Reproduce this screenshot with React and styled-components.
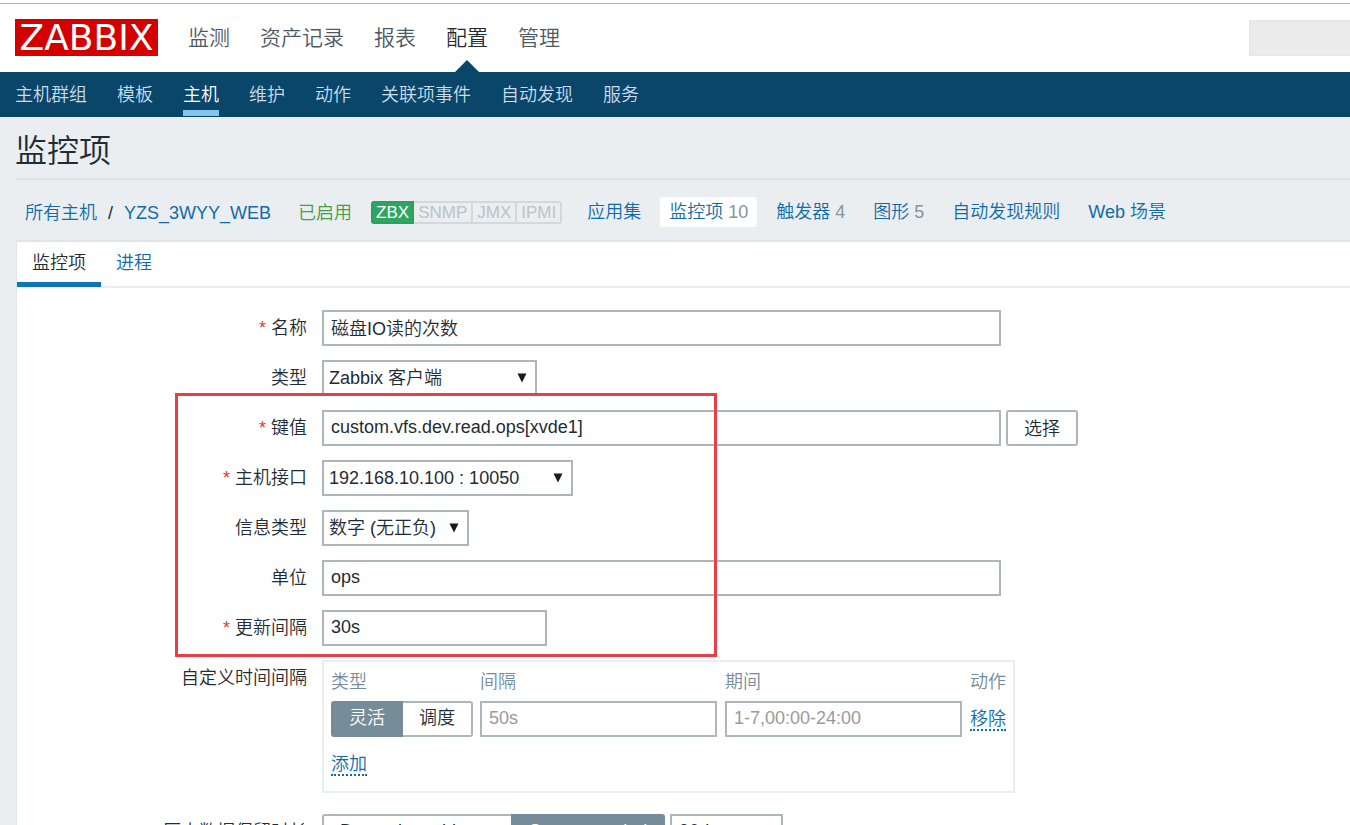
import React, { useState } from "react";
import styled, { createGlobalStyle, css } from "styled-components";

const color = {
  text: "#1f2c33",
  link: "#0f6ca8",
  muted: "#768d99",
  border: "#acb7bb",
  line: "#dfe4e7",
  page: "#ebeef0",
  navy: "#0a466a",
  red: "#e5404a",
};

const GlobalStyle = createGlobalStyle`
  *, *::before, *::after { box-sizing: border-box; }
  body {
    margin: 0;
    background: ${color.page};
    color: ${color.text};
    font: 350 18px/24px "Liberation Sans", "Noto Sans CJK SC", sans-serif;
  }
  input, select, button { font: inherit; color: inherit; }
  a { color: ${color.link}; text-decoration: none; }
`;

const Page = styled.div`
  height: 100vh;
  overflow: hidden;
  padding-top: 3px;
  background: #fff;
`;

const Header = styled.header`
  display: flex;
  align-items: center;
  height: 69px;
  padding-left: 15px;
  border-top: 1px solid #b2b4b8;
`;

const Logo = styled.a`
  width: 143px;
  height: 37px;
  margin: 0 30px 1px 0;
  background: #d40000;
  color: #fff;
  font: 400 36px/37px "DejaVu Sans", sans-serif;
  text-align: center;
`;

const MainNav = styled.nav`
  display: flex;
  gap: 30px;
  align-self: stretch;
`;

const MainLink = styled.a`
  position: relative;
  display: flex;
  align-items: center;
  font-size: 21px;
  color: ${(p) => (p.$active ? color.text : "#4d5a63")};
  ${(p) =>
    p.$active &&
    css`
      &::after {
        content: "";
        position: absolute;
        bottom: 0;
        left: 50%;
        margin-left: -12px;
        border: 12px solid transparent;
        border-top-width: 0;
        border-bottom-color: ${color.navy};
      }
    `}
`;

const Search = styled.input`
  width: 101px;
  height: 36px;
  margin-left: auto;
  border: 2px solid #e7e7e7;
  border-right: 0;
  background: #ececec;
`;

const SubNav = styled.nav`
  display: flex;
  gap: 30px;
  height: 45px;
  padding: 0 15px 1px;
  background: ${color.navy};
`;

const SubLink = styled.a`
  padding-top: 11px;
  border-bottom: 6px solid ${(p) => (p.$active ? "#7fc4ef" : "transparent")};
  color: ${(p) => (p.$active ? "#fff" : "#c9dcea")};
`;

const Content = styled.main`
  padding-left: 15px;
  background: ${color.page};
`;

const Title = styled.h1`
  margin: 0;
  padding: 14px 0 7px;
  border-bottom: 2px solid ${color.line};
  font-size: 32px;
  line-height: 40px;
  font-weight: 350;
`;

const Crumbs = styled.nav`
  display: flex;
  align-items: center;
  height: 60px;
  padding: 4px 0 0 10px;
  white-space: nowrap;
`;

const HostPath = styled.div`
  display: flex;
  gap: 11px;
  margin-right: 27px;
  padding-top: 2px;
`;

const Enabled = styled.span`
  margin-right: 19px;
  padding-top: 2px;
  color: #429e47;
`;

const Badges = styled.div`
  display: flex;
  margin-right: 16px;
  line-height: 19px;
`;

const Badge = styled.span`
  height: 23px;
  padding: 0 ${(p) => (p.$on ? "3px" : "4px")};
  border: 2px solid ${(p) => (p.$on ? "#2f9f5e" : "#d3d8db")};
  border-left-width: ${(p) => (p.$on ? "2px" : "0")};
  background: ${(p) => (p.$on ? "#2fa562" : "transparent")};
  color: ${(p) => (p.$on ? "#fff" : "#bcc3c7")};
  font-size: 17px;
  &:first-child { border-radius: 3px 0 0 3px; }
  &:last-child { border-radius: 0 3px 3px 0; }
`;

const Sections = styled.div`
  display: flex;
  gap: 10px;
`;

const SectionLink = styled.a`
  height: 30px;
  padding: 3px 9px;
  border-radius: 3px;
  background: ${(p) => (p.$active ? "#fff" : "transparent")};
`;

const Count = styled.span`
  color: #87949b;
`;

const Panel = styled.section`
  margin-left: 1px;
  border: solid ${color.line};
  border-width: 2px 0 0 1px;
  background: #fff;
`;

const Tabs = styled.div`
  display: flex;
  height: 46px;
  border-bottom: 2px solid ${color.page};
`;

const Tab = styled.button`
  height: 45px;
  padding: 1px 15px 0;
  border: 0;
  border-bottom: 5px solid ${(p) => (p.$active ? "#0f75b5" : "transparent")};
  background: none;
  color: ${(p) => (p.$active ? color.text : color.link)};
`;

const Form = styled.form`
  position: relative;
  display: flex;
  flex-direction: column;
  gap: 14px;
  padding: 22px 0;
`;

const Row = styled.div`
  display: grid;
  grid-template-columns: 290px 1fr;
  column-gap: 15px;
  margin-bottom: ${(p) => (p.$last ? "7px" : "0")};
`;

const Label = styled.label`
  padding-top: 6px;
  text-align: right;
  white-space: nowrap;
  &::before {
    content: ${(p) => (p.$required ? '"* "' : "none")};
    color: #e33734;
  }
`;

const Fields = styled.div`
  display: flex;
  gap: 5px;
`;

const widths = { full: "679px", medium: "225px", small: "113px", cell: "237px" };

const Input = styled.input`
  display: block;
  width: ${(p) => widths[p.$size]};
  height: 36px;
  padding: 0 7px 2px;
  border: 2px solid ${color.border};
  border-radius: 0;
  background: #fff;
  &::placeholder { color: #9a9a9a; opacity: 1; }
`;

const SelectBox = styled.div`
  position: relative;
  width: ${(p) => p.$width};
`;

const SelectControl = styled.select`
  appearance: none;
  width: 100%;
  height: 36px;
  padding: 0 24px 0 5px;
  border: 2px solid ${color.border};
  border-radius: 0;
  background: #fff;
`;

const Arrow = styled.svg`
  position: absolute;
  top: 13px;
  right: 10px;
  pointer-events: none;
`;

const Button = styled.button`
  width: 72px;
  height: 36px;
  padding: 2px 0 0;
  border: 2px solid ${color.border};
  border-radius: 3px;
  background: #fff;
`;

const IntervalBox = styled.div`
  width: 693px;
  height: 133px;
  padding: 0 7px;
  border: 2px solid ${color.page};
`;

const IntervalTable = styled.table`
  border-collapse: collapse;
  table-layout: fixed;
  width: 100%;
  th, td { padding: 0; text-align: left; white-space: nowrap; }
  th { height: 39px; color: ${color.muted}; font-weight: 350; }
  th:nth-child(1) { width: 149px; }
  th:nth-child(2), th:nth-child(3) { width: 245px; }
  tfoot td { height: 54px; }
`;

const ActionLink = styled.a`
  border-bottom: 2px dotted ${color.link};
`;

const SegmentGroup = styled.div`
  display: inline-flex;
  vertical-align: top;
`;

const Segment = styled.label`
  height: 36px;
  padding: 3px 16px 5px;
  border: 2px solid ${color.border};
  white-space: nowrap;
  &:first-child { border-right-width: 0; border-radius: 3px 0 0 3px; }
  &:last-child { border-left-width: 0; border-radius: 0 3px 3px 0; }
  &:has(input:checked) {
    border-width: 2px;
    border-color: ${color.muted};
    background: ${color.muted};
    color: #fff;
  }
`;

const HiddenRadio = styled.input`
  position: absolute;
  width: 1px;
  height: 1px;
  margin: 0;
  opacity: 0;
  pointer-events: none;
`;

const Highlight = styled.div`
  position: absolute;
  top: 105px;
  left: 158px;
  width: 542px;
  height: 264px;
  border: 3px solid ${color.red};
  pointer-events: none;
`;

function Select({ id, width, value }) {
  return (
    <SelectBox $width={width}>
      <SelectControl id={id} defaultValue={value}>
        <option>{value}</option>
      </SelectControl>
      <Arrow width="10" height="10" viewBox="0 0 10 10" aria-hidden="true">
        <path d="M0.5 0.5H9.5L5 9.5Z" fill="#1b1b1b" />
      </Arrow>
    </SelectBox>
  );
}

function Segments({ name, options, initial }) {
  const [value, setValue] = useState(initial);
  return (
    <SegmentGroup role="radiogroup" aria-label={name}>
      {options.map((o) => (
        <Segment key={o}>
          <HiddenRadio type="radio" name={name} checked={value === o} onChange={() => setValue(o)} />
          {o}
        </Segment>
      ))}
    </SegmentGroup>
  );
}

function Field({ id, label, required, last, children }) {
  return (
    <Row $last={last}>
      <Label htmlFor={id} $required={required}>{label}</Label>
      <Fields>{children}</Fields>
    </Row>
  );
}

const mainItems = ["监测", "资产记录", "报表", "配置", "管理"];
const subItems = ["主机群组", "模板", "主机", "维护", "动作", "关联项事件", "自动发现", "服务"];
const sections = [
  ["应用集"],
  ["监控项", 10],
  ["触发器", 4],
  ["图形", 5],
  ["自动发现规则"],
  ["Web 场景"],
];

export default function App() {
  return (
    <Page>
      <GlobalStyle />
      <Header>
        <Logo href="#">ZABBIX</Logo>
        <MainNav>
          {mainItems.map((t) => (
            <MainLink key={t} href="#" $active={t === "配置"}>{t}</MainLink>
          ))}
        </MainNav>
        <Search type="search" aria-label="搜索" />
      </Header>
      <SubNav>
        {subItems.map((t) => (
          <SubLink key={t} href="#" $active={t === "主机"}>{t}</SubLink>
        ))}
      </SubNav>
      <Content>
        <Title>监控项</Title>
        <Crumbs>
          <HostPath>
            <a href="#">所有主机</a>
            <span>/</span>
            <a href="#">YZS_3WYY_WEB</a>
          </HostPath>
          <Enabled>已启用</Enabled>
          <Badges>
            <Badge $on>ZBX</Badge>
            <Badge>SNMP</Badge>
            <Badge>JMX</Badge>
            <Badge>IPMI</Badge>
          </Badges>
          <Sections>
            {sections.map(([t, n]) => (
              <SectionLink key={t} href="#" $active={t === "监控项"}>
                {t}
                {n && <Count> {n}</Count>}
              </SectionLink>
            ))}
          </Sections>
        </Crumbs>
        <Panel>
          <Tabs>
            <Tab type="button" $active>监控项</Tab>
            <Tab type="button">进程</Tab>
          </Tabs>
          <Form>
            <Field id="name" label="名称" required>
              <Input id="name" $size="full" defaultValue="磁盘IO读的次数" />
            </Field>
            <Field id="type" label="类型">
              <Select id="type" width="215px" value="Zabbix 客户端" />
            </Field>
            <Field id="key" label="键值" required>
              <Input id="key" $size="full" defaultValue="custom.vfs.dev.read.ops[xvde1]" />
              <Button type="button">选择</Button>
            </Field>
            <Field id="interface" label="主机接口" required>
              <Select id="interface" width="251px" value="192.168.10.100 : 10050" />
            </Field>
            <Field id="value-type" label="信息类型">
              <Select id="value-type" width="147px" value="数字 (无正负)" />
            </Field>
            <Field id="units" label="单位">
              <Input id="units" $size="full" defaultValue="ops" />
            </Field>
            <Field id="delay" label="更新间隔" required>
              <Input id="delay" $size="medium" defaultValue="30s" />
            </Field>
            <Field id="custom-delay" label="自定义时间间隔" last>
              <IntervalBox>
                <IntervalTable>
                  <thead>
                    <tr>
                      <th>类型</th>
                      <th>间隔</th>
                      <th>期间</th>
                      <th>动作</th>
                    </tr>
                  </thead>
                  <tbody>
                    <tr>
                      <td><Segments name="间隔类型" options={["灵活", "调度"]} initial="灵活" /></td>
                      <td><Input id="custom-delay" $size="cell" placeholder="50s" /></td>
                      <td><Input aria-label="期间" $size="cell" placeholder="1-7,00:00-24:00" /></td>
                      <td><ActionLink href="#">移除</ActionLink></td>
                    </tr>
                  </tbody>
                  <tfoot>
                    <tr>
                      <td colSpan={4}><ActionLink href="#">添加</ActionLink></td>
                    </tr>
                  </tfoot>
                </IntervalTable>
              </IntervalBox>
            </Field>
            <Field id="history" label="历史数据保留时长">
              <Segments
                name="历史数据"
                options={["Do not keep history", "Storage period"]}
                initial="Storage period"
              />
              <Input id="history" $size="small" defaultValue="90d" />
            </Field>
            <Highlight />
          </Form>
        </Panel>
      </Content>
    </Page>
  );
}
